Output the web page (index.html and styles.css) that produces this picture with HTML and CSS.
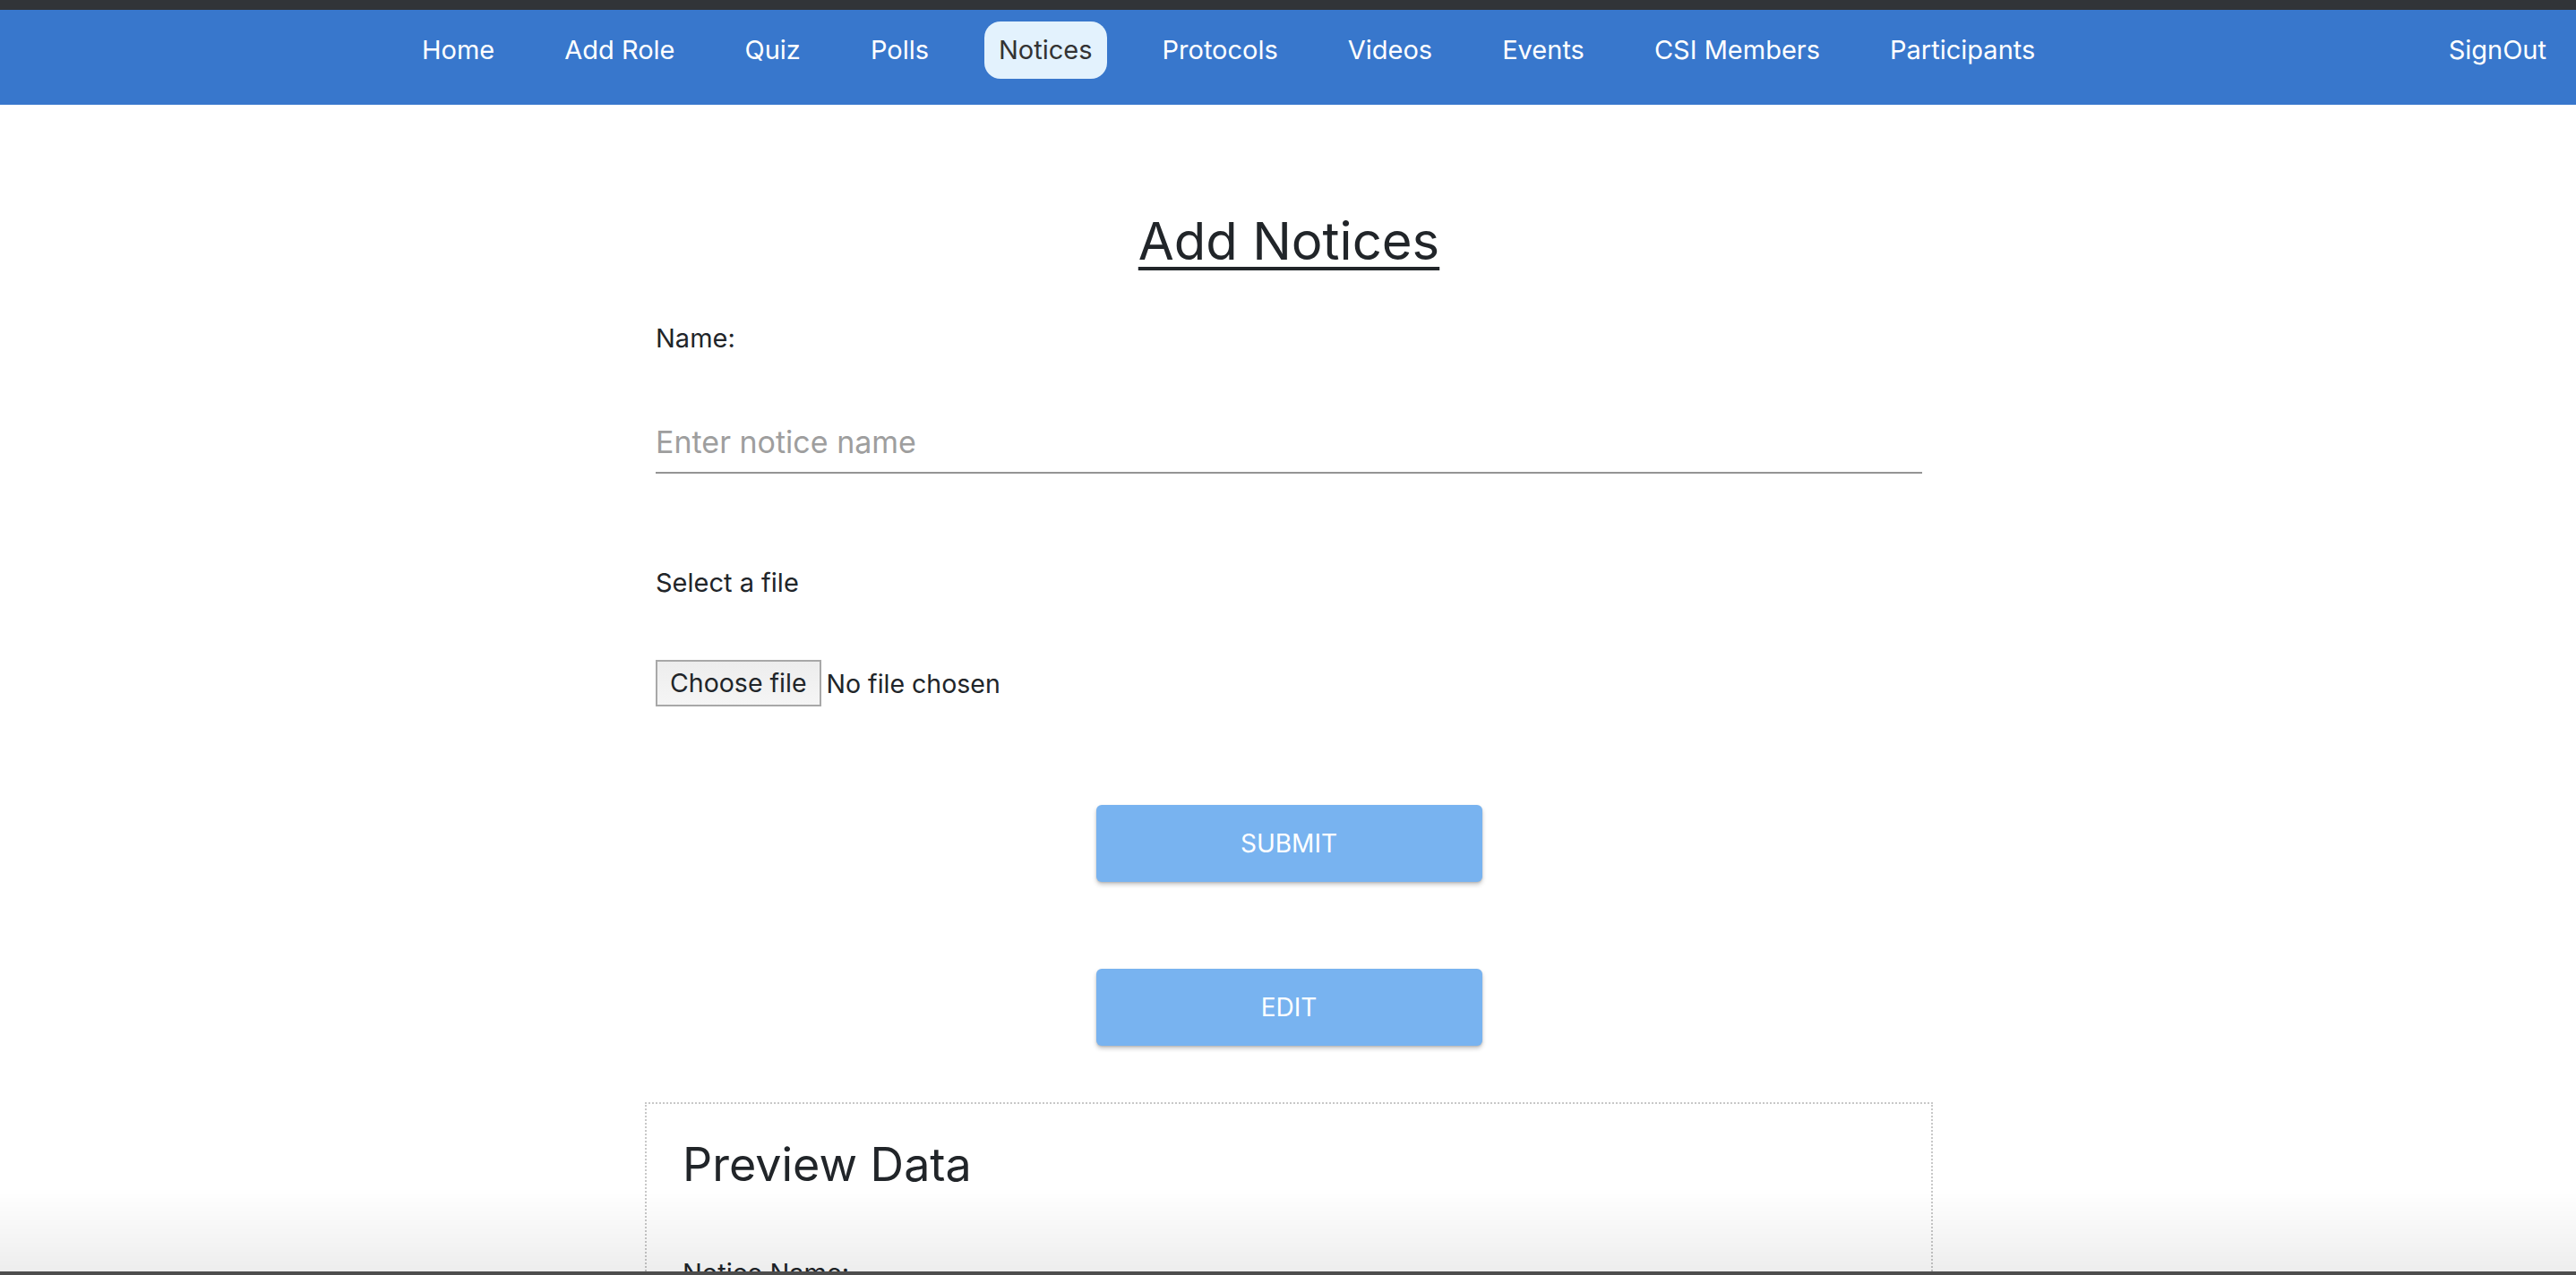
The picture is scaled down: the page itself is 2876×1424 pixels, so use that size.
FILE: index.html
```html
<!DOCTYPE html>
<html lang="en">
<head>
<meta charset="utf-8">
<title>Add Notices</title>
<link rel="stylesheet" href="styles.css">
</head>
<body>
<div class="topbar"></div>
<nav class="navbar">
  <ul class="nav-links">
    <li><a class="nav-link" href="#">Home</a></li>
    <li><a class="nav-link" href="#">Add Role</a></li>
    <li><a class="nav-link" href="#">Quiz</a></li>
    <li><a class="nav-link" href="#">Polls</a></li>
    <li><a class="nav-link active" href="#">Notices</a></li>
    <li><a class="nav-link" href="#">Protocols</a></li>
    <li><a class="nav-link" href="#">Videos</a></li>
    <li><a class="nav-link" href="#">Events</a></li>
    <li><a class="nav-link" href="#">CSI Members</a></li>
    <li><a class="nav-link" href="#">Participants</a></li>
  </ul>
  <a class="nav-link signout" href="#">SignOut</a>
</nav>

<main class="page">
  <h2 class="page-title">Add Notices</h2>
  <form class="notice-form">
    <label class="field-label" for="noticeName">Name:</label>
    <input class="text-input" id="noticeName" type="text" placeholder="Enter notice name">

    <div class="field-label file-label">Select a file</div>
    <div class="file-row">
      <span class="file-btn">Choose file</span>
      <span class="file-status">No file chosen</span>
    </div>

    <div class="actions">
      <button type="button" class="action-btn">Submit</button>
      <button type="button" class="action-btn">Edit</button>
    </div>
  </form>

  <section class="preview">
    <h3 class="preview-title">Preview Data</h3>
    <p class="preview-row">Notice Name:</p>
  </section>
</main>

<div class="window-shade"></div>
</body>
</html>
```

FILE: styles.css
```css
html, body {
  margin: 0;
  padding: 0;
}

body {
  background: #ffffff;
  color: #212529;
  font-family: "Inter", "Open Sans", sans-serif;
  overflow: hidden;
}

.topbar {
  height: 11px;
  background: #313438;
}

.navbar {
  height: 106px;
  box-sizing: border-box;
  background: #3877cc;
  display: flex;
  align-items: flex-start;
  padding: 13px 17px 0 455px;
}

.nav-links {
  list-style: none;
  margin: 0;
  padding: 0;
  display: flex;
  gap: 46px;
}

.nav-link {
  display: block;
  height: 64px;
  line-height: 64px;
  padding: 0 16px;
  border-radius: 18px;
  color: #ffffff;
  text-decoration: none;
  font-size: 29px;
  font-weight: 400;
}

.nav-link.active {
  background: #e3f2fd;
  color: #333333;
}

.signout {
  margin-left: auto;
}

.page {
  width: 1438px;
  margin: 0 auto;
  padding-left: 2px;
}

.page-title {
  margin: 114px 0 0;
  text-align: center;
  font-size: 58px;
  font-weight: 400;
  line-height: 77px;
  text-decoration: underline;
  text-decoration-thickness: 4px;
  text-underline-offset: 8px;
  color: #212529;
}

.notice-form {
  width: 1414px;
  margin: 0 auto;
  display: flex;
  flex-direction: column;
}

.field-label {
  display: block;
  font-size: 29px;
  line-height: 42px;
  margin-top: 49px;
  color: #212529;
}

.text-input {
  margin-top: 50px;
  height: 80px;
  box-sizing: border-box;
  border: none;
  border-bottom: 2px solid #949494;
  padding: 10px 0 0;
  font-family: inherit;
  font-size: 34px;
  color: #212529;
  outline: none;
  background: transparent;
}

.text-input::placeholder {
  color: #9e9e9e;
}

.file-label {
  margin-top: 101px;
}

.file-row {
  margin-top: 65px;
  display: flex;
  align-items: center;
  gap: 6px;
}

.file-btn {
  display: inline-block;
  box-sizing: border-box;
  height: 52px;
  padding: 0 14px;
  line-height: 48px;
  border: 2px solid #a8a8a8;
  background: linear-gradient(#ededed, #f5f5f5);
  font-size: 28.5px;
  color: #212529;
}

.file-status {
  font-size: 28.5px;
  color: #212529;
}

.actions {
  margin-top: 110px;
  display: flex;
  flex-direction: column;
  align-items: center;
  gap: 97px;
}

.action-btn {
  width: 431px;
  height: 86px;
  border: none;
  border-radius: 6px;
  background: #78b3f0;
  color: #ffffff;
  font-family: inherit;
  font-size: 28px;
  text-transform: uppercase;
  letter-spacing: 0;
  box-shadow: 0 3px 5px rgba(0, 0, 0, 0.22), 0 1px 2px rgba(0, 0, 0, 0.12);
}

.preview {
  margin-top: 63px;
  border: 2px dotted #c8c8c8;
  padding: 0 40px;
  min-height: 400px;
}

.preview-title {
  margin: 38px 0 0;
  font-size: 52px;
  font-weight: 400;
  line-height: 60px;
  color: #212529;
}

.preview-row {
  margin: 70px 0 0;
  font-size: 29px;
  line-height: 42px;
}

.window-shade {
  position: fixed;
  left: 0;
  right: 0;
  bottom: 0;
  height: 94px;
  background: linear-gradient(rgba(0, 0, 0, 0), rgba(0, 0, 0, 0.07) 96%, #4d4d4d 96%);
  pointer-events: none;
}
```
